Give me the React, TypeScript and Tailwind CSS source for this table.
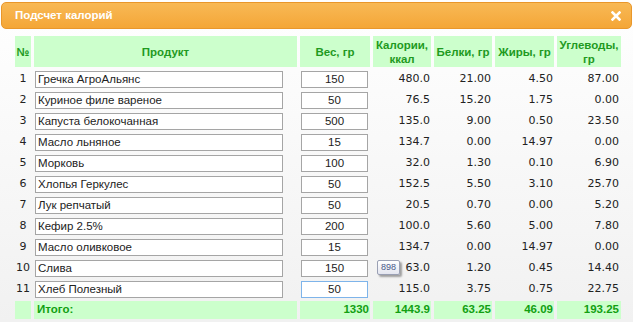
import React from "react";

const rows: [string, string, string, string, string, string][] = [
  ["Гречка АгроАльянс", "150", "480.0", "21.00", "4.50", "87.00"],
  ["Куриное филе вареное", "50", "76.5", "15.20", "1.75", "0.00"],
  ["Капуста белокочанная", "500", "135.0", "9.00", "0.50", "23.50"],
  ["Масло льняное", "15", "134.7", "0.00", "14.97", "0.00"],
  ["Морковь", "100", "32.0", "1.30", "0.10", "6.90"],
  ["Хлопья Геркулес", "50", "152.5", "5.50", "3.10", "25.70"],
  ["Лук репчатый", "50", "20.5", "0.70", "0.00", "5.20"],
  ["Кефир 2.5%", "200", "100.0", "5.60", "5.00", "7.80"],
  ["Масло оливковое", "15", "134.7", "0.00", "14.97", "0.00"],
  ["Слива", "150", "63.0", "1.20", "0.45", "14.40"],
  ["Хлеб Полезный", "50", "115.0", "3.75", "0.75", "22.75"],
];

const sans = { fontFamily: "'Liberation Sans', Arial, sans-serif" };
const dv = { fontFamily: "'DejaVu Sans', Verdana, sans-serif" };

export default function App() {
  return (
    <div
      className="w-[633px] h-[322px] overflow-hidden bg-gradient-to-b from-[#ffffff] to-[#f1f1f1] text-[11px] text-[#222]"
      style={dv}
    >
      <div className="mx-px mt-[2px] h-[27px] rounded-[5px] border border-[#e9972b] bg-gradient-to-b from-[#f8b955] to-[#f4a636] flex items-center justify-between pl-[13px] pr-[10px]">
        <span className="text-white font-bold text-[11.5px]" style={sans}>
          Подсчет калорий
        </span>
        <svg width="10" height="10" viewBox="0 0 10 10">
          <path d="M1.5 1.5 L8.5 8.5 M8.5 1.5 L1.5 8.5" stroke="#fff" strokeWidth="2.6" strokeLinecap="square" />
        </svg>
      </div>
      <div className="pl-[12px] pt-[4px]">
        <table className="border-separate border-spacing-[3px] table-fixed w-[612px]">
          <colgroup>
            <col className="w-[16px]" />
            <col className="w-[263px]" />
            <col className="w-[70px]" />
            <col className="w-[58px]" />
            <col className="w-[58px]" />
            <col className="w-[59px]" />
            <col className="w-[64px]" />
          </colgroup>
          <thead>
            <tr className="h-[31px] text-[#1f9a1f] font-bold text-[11.5px] leading-[14px]" style={sans}>
              <th className="bg-[#ccffcc] font-bold p-0">№</th>
              <th className="bg-[#ccffcc] font-bold p-0">Продукт</th>
              <th className="bg-[#ccffcc] font-bold p-0">Вес, гр</th>
              <th className="bg-[#ccffcc] font-bold p-0">Калории,<br />ккал</th>
              <th className="bg-[#ccffcc] font-bold p-0 whitespace-nowrap">Белки, гр</th>
              <th className="bg-[#ccffcc] font-bold p-0 whitespace-nowrap">Жиры, гр</th>
              <th className="bg-[#ccffcc] font-bold p-0">Углеводы,<br />гр</th>
            </tr>
          </thead>
          <tbody>
            {rows.map((r, i) => (
              <tr key={i} className="h-[18px] text-[11px]">
                <td className="text-center p-0">{i + 1}</td>
                <td className="p-0 pl-[1px]">
                  <div
                    className="w-[248px] h-[17px] border border-[#a5a5a5] bg-white pl-[2px] leading-[15px] whitespace-nowrap text-[11.5px]"
                    style={sans}
                  >
                    {r[0]}
                  </div>
                </td>
                <td className="p-0 pl-[1px]">
                  <div
                    className={
                      "w-[67px] h-[17px] border bg-white text-center leading-[15px] text-[11.5px] " +
                      (i === 10 ? "border-[#7eb4ea]" : "border-[#a5a5a5]")
                    }
                    style={sans}
                  >
                    {r[1]}
                  </div>
                </td>
                <td className="p-0 pr-[1px] text-right relative">
                  {i === 9 && (
                    <span
                      className="absolute left-[4px] top-[1px] h-[15px] px-[3px] border border-[#9aa0b4] rounded-[2px] bg-gradient-to-b from-white to-[#e4e6f0] text-[9px] leading-[13px] text-[#4a5a8a] shadow-[2px_2px_2px_rgba(0,0,0,0.35)]"
                      style={sans}
                    >
                      898
                    </span>
                  )}
                  {r[2]}
                </td>
                <td className="p-0 pr-[1px] text-right">{r[3]}</td>
                <td className="p-0 pr-[1px] text-right">{r[4]}</td>
                <td className="p-0 pr-[2px] text-right">{r[5]}</td>
              </tr>
            ))}
            <tr className="h-[18px] text-[#12a012] font-bold text-[11.5px]" style={sans}>
              <td className="bg-[#ccffcc] p-0"></td>
              <td className="bg-[#ccffcc] p-0 pl-[3px]">Итого:</td>
              <td className="bg-[#ccffcc] p-0 pr-[1px] text-right">1330</td>
              <td className="bg-[#ccffcc] p-0 pr-[1px] text-right">1443.9</td>
              <td className="bg-[#ccffcc] p-0 pr-[1px] text-right">63.25</td>
              <td className="bg-[#ccffcc] p-0 pr-[1px] text-right">46.09</td>
              <td className="bg-[#ccffcc] p-0 pr-[2px] text-right">193.25</td>
            </tr>
          </tbody>
        </table>
        <div className="flex gap-[5px] pl-[2px] mt-[1px]">
          <div className="w-[122px] h-[10px] rounded-[3px] border border-[#c8c8c8] bg-[#f4f4f4]" />
          <div className="w-[195px] h-[10px] rounded-[3px] border border-[#c8c8c8] bg-[#f4f4f4]" />
        </div>
      </div>
    </div>
  );
}
